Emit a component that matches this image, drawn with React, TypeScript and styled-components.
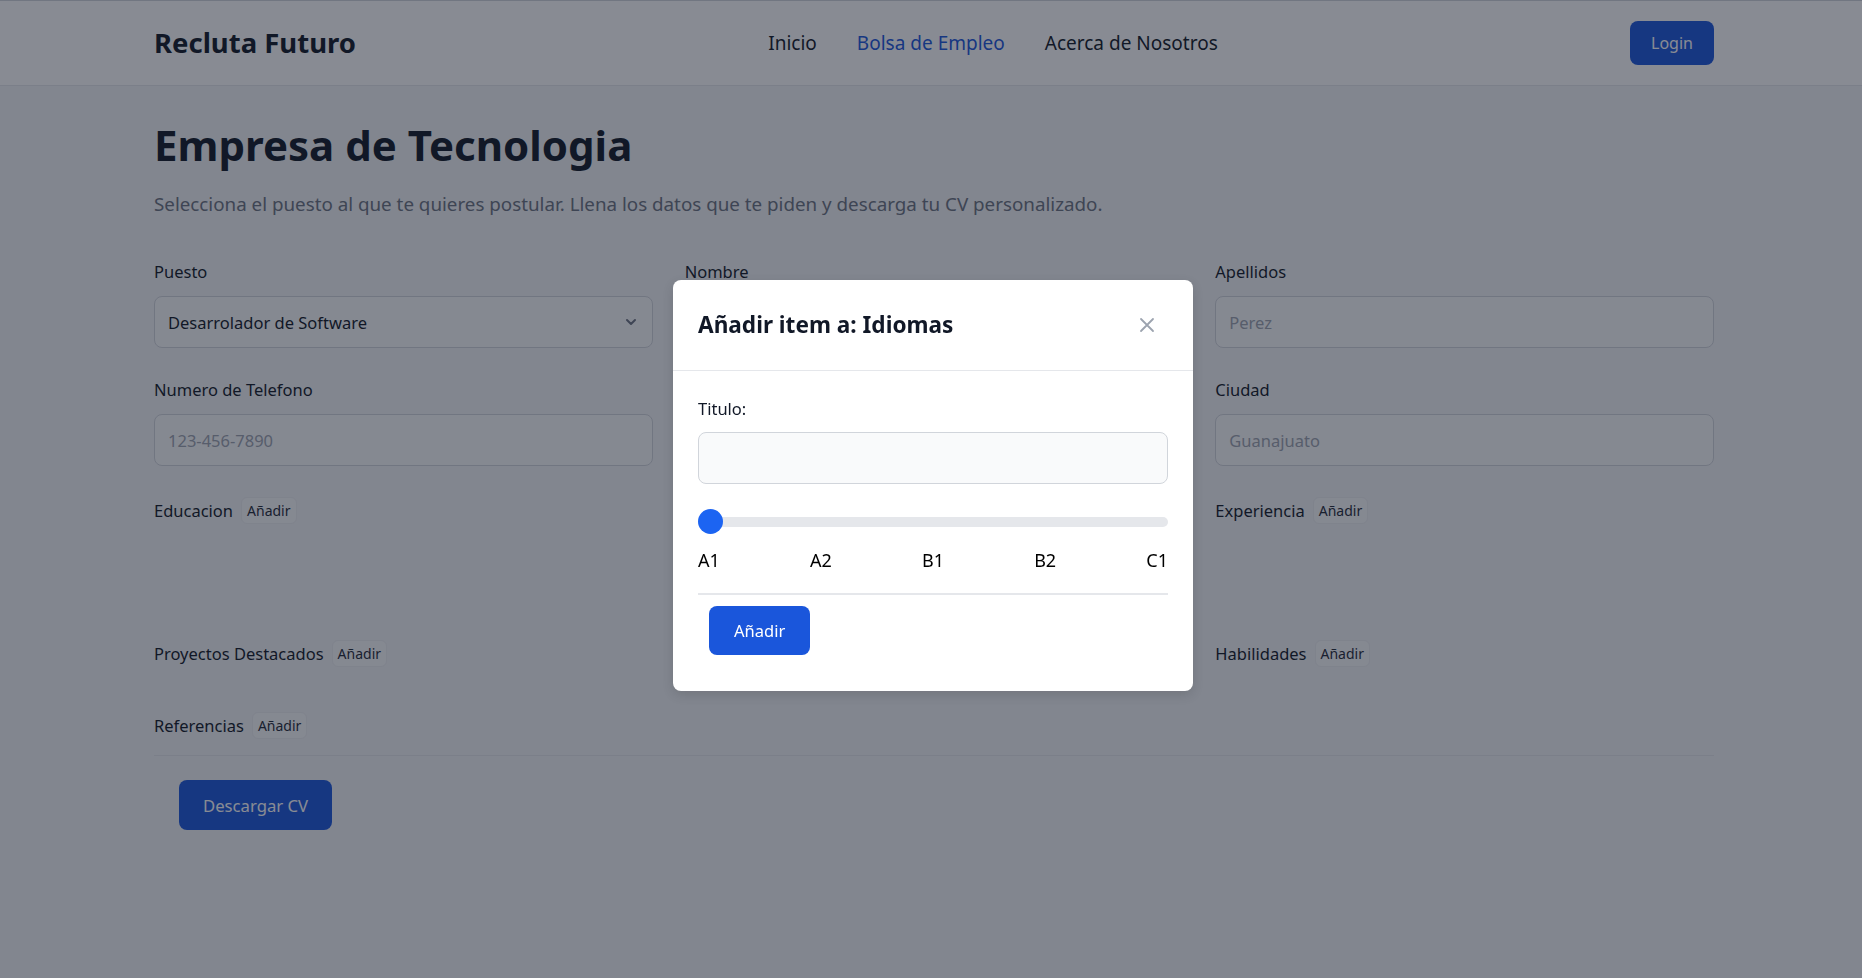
import React from "react";
import styled, { createGlobalStyle } from "styled-components";

const GlobalStyle = createGlobalStyle`
  * { box-sizing: border-box; }
  html, body { margin: 0; padding: 0; }
  body {
    background: #f3f4f6;
    font-family: "Noto Sans", "Open Sans", sans-serif;
    color: #111827;
  }
`;

const Page = styled.div`
  min-height: 978px;
`;

const NavBar = styled.header`
  background: #ffffff;
  border-top: 1px solid #d1d5db;
  border-bottom: 1px solid #e5e7eb;
`;

const Container = styled.div`
  width: 1566px;
  margin: 0 auto;
  padding-left: 6px;
`;

const NavInner = styled(Container)`
  height: 84px;
  display: flex;
  align-items: center;
  justify-content: space-between;
`;

const Logo = styled.div`
  font-size: 27.5px;
  font-weight: 700;
  color: #111827;
  margin-top: -1px;
`;

const NavLinks = styled.nav`
  display: flex;
  gap: 40px;
`;

const NavLink = styled.a<{ $active?: boolean }>`
  font-size: 19px;
  color: ${(p) => (p.$active ? "#1a56db" : "#111827")};
  text-decoration: none;
`;

const LoginButton = styled.button`
  width: 84px;
  height: 44px;
  border: none;
  border-radius: 8px;
  background: #1a56db;
  color: #ffffff;
  font-family: inherit;
  font-size: 16px;
`;

const Main = styled(Container)`
  padding-top: 34px;
`;

const Title = styled.h1`
  margin: 0;
  font-size: 42px;
  line-height: 1.2;
  font-weight: 700;
  color: #111827;
`;

const Subtitle = styled.p`
  margin: 20px 0 0;
  font-size: 18.8px;
  line-height: 28px;
  color: #6b7280;
`;

const FormGrid = styled.div`
  margin-top: 42px;
  display: grid;
  grid-template-columns: repeat(3, 1fr);
  column-gap: 32px;
  row-gap: 30px;
`;

const Field = styled.div`
  display: flex;
  flex-direction: column;
  gap: 12px;
`;

const Label = styled.label`
  font-size: 16.5px;
  line-height: 24px;
  color: #111827;
`;

const TextInput = styled.input`
  height: 52px;
  width: 100%;
  padding: 0 13px;
  border: 1px solid #d1d5db;
  border-radius: 8px;
  background: #f9fafb;
  font-family: inherit;
  font-size: 16.5px;
  color: #111827;
  &::placeholder { color: #9ca3af; }
`;

const SelectBox = styled.div`
  height: 52px;
  padding: 0 14px 0 13px;
  border: 1px solid #d1d5db;
  border-radius: 8px;
  background: #f9fafb;
  display: flex;
  align-items: center;
  justify-content: space-between;
  font-size: 16.5px;
  color: #111827;
`;

const Section = styled.div`
  display: flex;
  flex-direction: column;
`;

const SectionHeader = styled.div`
  min-height: 28px;
  display: flex;
  align-items: center;
  gap: 8px;
`;

const SectionTitle = styled.span`
  font-size: 16.5px;
  color: #111827;
`;

const AddBadge = styled.button`
  padding: 3px 5px;
  border: 1px solid #eceef1;
  border-radius: 6px;
  background: #f9fafb;
  font-family: inherit;
  font-size: 14px;
  line-height: 19px;
  color: #1f2937;
`;

const ItemList = styled.div<{ $minHeight?: number }>`
  min-height: ${(p) => p.$minHeight ?? 14}px;
`;

const GridSpacer = styled.div<{ $minHeight?: number }>`
  min-height: ${(p) => p.$minHeight ?? 0}px;
`;

const Footer = styled.div`
  margin-top: 2px;
  border-top: 1px solid #e5e7eb;
  padding-top: 24px;
`;

const DownloadButton = styled.button`
  margin-left: 25px;
  height: 50px;
  padding: 0 24px;
  border: none;
  border-radius: 8px;
  background: #1a56db;
  color: #ffffff;
  font-family: inherit;
  font-size: 16.7px;
`;

const Overlay = styled.div`
  position: fixed;
  inset: 0;
  padding: 0 0 0 4px;
  background: rgba(17, 24, 39, 0.5);
  display: flex;
  align-items: center;
  justify-content: center;
`;

const Modal = styled.div`
  width: 520px;
  margin-top: -7px;
  background: #ffffff;
  border-radius: 8px;
  box-shadow: 0 4px 12px rgba(0, 0, 0, 0.12);
  font-family: "Noto Sans", sans-serif;
`;

const ModalHeader = styled.div`
  height: 91px;
  padding: 0 28px 0 25px;
  display: flex;
  align-items: center;
  justify-content: space-between;
  border-bottom: 1px solid #e5e7eb;
`;

const ModalTitle = styled.h3`
  margin: -1px 0 0;
  font-size: 22.6px;
  font-weight: 700;
  color: #111827;
`;

const CloseButton = styled.button`
  width: 36px;
  height: 36px;
  margin-top: -1px;
  border: none;
  background: transparent;
  color: #9ca3af;
  display: flex;
  align-items: center;
  justify-content: center;
  padding: 0;
`;

const ModalBody = styled.div`
  padding: 26px 25px 36px;
`;

const ModalLabel = styled.label`
  display: block;
  font-size: 16.5px;
  line-height: 24px;
  color: #111827;
`;

const ModalInput = styled.input`
  display: block;
  margin-top: 11px;
  width: 100%;
  height: 52px;
  padding: 0 13px;
  border: 1px solid #d1d5db;
  border-radius: 8px;
  background: #f9fafb;
  font-family: inherit;
  font-size: 16px;
`;

const Range = styled.input`
  -webkit-appearance: none;
  appearance: none;
  display: block;
  width: 100%;
  height: 25px;
  margin: 25px 0 0;
  background: transparent;
  &::-webkit-slider-runnable-track {
    height: 10px;
    border-radius: 5px;
    background: #e5e7eb;
  }
  &::-webkit-slider-thumb {
    -webkit-appearance: none;
    appearance: none;
    width: 25px;
    height: 25px;
    border-radius: 50%;
    background: #1c64f2;
    border: none;
    margin-top: -7.5px;
  }
`;

const LevelLabels = styled.div`
  margin-top: 14px;
  display: flex;
  justify-content: space-between;
  font-size: 18px;
  line-height: 24px;
  color: #000000;
`;

const Divider = styled.div`
  margin-top: 21px;
  height: 2px;
  background: #e5e7eb;
`;

const SubmitButton = styled.button`
  margin: 11px 0 0 11px;
  height: 49px;
  padding: 0 25px;
  border: none;
  border-radius: 8px;
  background: #1a56db;
  color: #ffffff;
  font-family: inherit;
  font-size: 16.5px;
`;

const Chevron = () => (
  <svg width="14" height="14" viewBox="0 0 14 14" fill="none">
    <path d="M3 5l4 4 4-4" stroke="#6b7280" strokeWidth="2" strokeLinecap="round" strokeLinejoin="round" />
  </svg>
);

const CloseIcon = () => (
  <svg width="16" height="16" viewBox="0 0 16 16" fill="none">
    <path d="M2 2l12 12M14 2L2 14" stroke="currentColor" strokeWidth="1.8" strokeLinecap="round" />
  </svg>
);

const SectionBlock = ({ title, minHeight }: { title: string; minHeight?: number }) => (
  <Section>
    <SectionHeader>
      <SectionTitle>{title}</SectionTitle>
      <AddBadge>Añadir</AddBadge>
    </SectionHeader>
    <ItemList $minHeight={minHeight} />
  </Section>
);

export default function App() {
  return (
    <Page>
      <GlobalStyle />
      <NavBar>
        <NavInner>
          <Logo>Recluta Futuro</Logo>
          <NavLinks>
            <NavLink>Inicio</NavLink>
            <NavLink $active>Bolsa de Empleo</NavLink>
            <NavLink>Acerca de Nosotros</NavLink>
          </NavLinks>
          <LoginButton>Login</LoginButton>
        </NavInner>
      </NavBar>
      <Main>
        <Title>Empresa de Tecnologia</Title>
        <Subtitle>
          Selecciona el puesto al que te quieres postular. Llena los datos que te piden y descarga tu CV personalizado.
        </Subtitle>
        <FormGrid>
          <Field>
            <Label>Puesto</Label>
            <SelectBox>
              <span>Desarrolador de Software</span>
              <Chevron />
            </SelectBox>
          </Field>
          <Field>
            <Label>Nombre</Label>
            <TextInput placeholder="Juan" />
          </Field>
          <Field>
            <Label>Apellidos</Label>
            <TextInput placeholder="Perez" />
          </Field>
          <Field>
            <Label>Numero de Telefono</Label>
            <TextInput placeholder="123-456-7890" />
          </Field>
          <GridSpacer />
          <Field>
            <Label>Ciudad</Label>
            <TextInput placeholder="Guanajuato" />
          </Field>
          <SectionBlock title="Educacion" />
          <GridSpacer $minHeight={113} />
          <SectionBlock title="Experiencia" />
          <SectionBlock title="Proyectos Destacados" />
          <GridSpacer />
          <SectionBlock title="Habilidades" />
          <SectionBlock title="Referencias" />
        </FormGrid>
        <Footer>
          <DownloadButton>Descargar CV</DownloadButton>
        </Footer>
      </Main>
      <Overlay>
        <Modal>
          <ModalHeader>
            <ModalTitle>Añadir item a: Idiomas</ModalTitle>
            <CloseButton aria-label="Cerrar">
              <CloseIcon />
            </CloseButton>
          </ModalHeader>
          <ModalBody>
            <ModalLabel>Titulo:</ModalLabel>
            <ModalInput />
            <Range type="range" min={0} max={4} step={1} defaultValue={0} />
            <LevelLabels>
              <span>A1</span>
              <span>A2</span>
              <span>B1</span>
              <span>B2</span>
              <span>C1</span>
            </LevelLabels>
            <Divider />
            <SubmitButton>Añadir</SubmitButton>
          </ModalBody>
        </Modal>
      </Overlay>
    </Page>
  );
}
